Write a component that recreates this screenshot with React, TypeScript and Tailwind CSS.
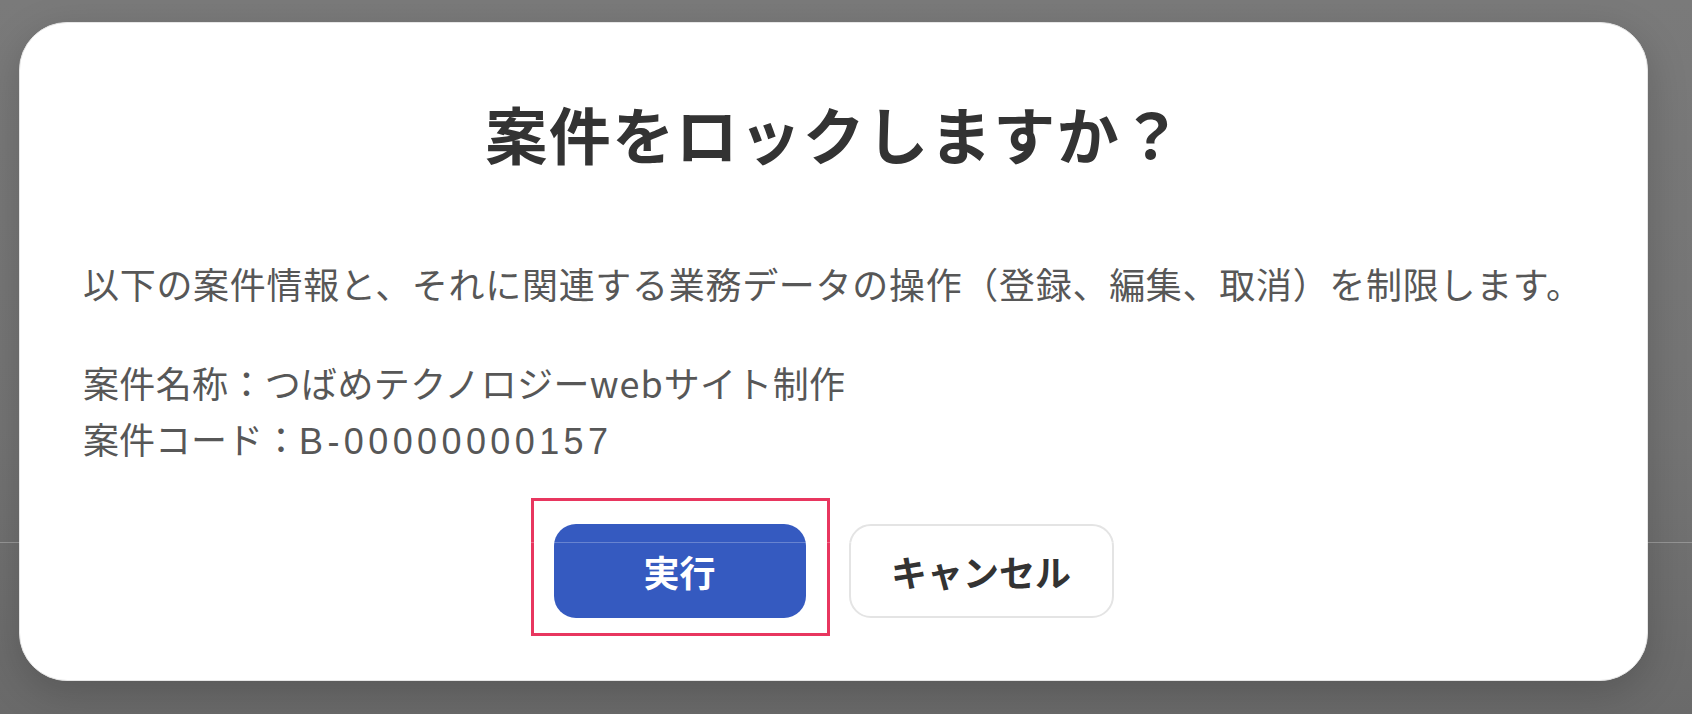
import React from "react";

export default function App() {
  return (
    <div className="relative w-[1692px] h-[714px] overflow-hidden bg-[linear-gradient(180deg,#7a7a7a_0%,#747474_60%,#6a6a6a_100%)] pt-[22px] pl-[19px] font-['Noto_Sans_CJK_JP','Noto_Sans',sans-serif]">
      <div className="w-[1629px] h-[659px] bg-white rounded-[48px] border border-[#e6e6e6] shadow-[0_12px_40px_rgba(0,0,0,0.18)] flex flex-col">
        <h1 className="pt-[79px] pl-[2px] text-center text-[62px] leading-[62px] font-bold tracking-[1.5px] text-[#333333]">
          案件をロックしますか？
        </h1>
        <div className="pl-[63px] text-[36px] leading-[56px] text-[#575757]">
          <p className="mt-[91px] tracking-[0.7px]">
            以下の案件情報と、それに関連する業務データの操作（登録、編集、取消）を制限します。
          </p>
          <p className="mt-[43px] tracking-[0.35px]">
            案件名称：つばめテクノロジー<span className="tracking-[1px]">web</span>サイト制作
          </p>
          <p>
            案件コード：<span className="font-['Liberation_Sans',sans-serif] tracking-[4.4px]">B-00000000157</span>
          </p>
        </div>
        <div className="mt-[54px] flex justify-center gap-[43px]">
          <div className="relative">
            <button className="w-[252px] h-[94px] rounded-[22px] bg-[#355ac0] text-white text-[36px] font-bold">
              実行
            </button>
            <div className="pointer-events-none absolute left-[-23px] top-[-26px] w-[299px] h-[138px] border-[3px] border-[#e8365f]" />
          </div>
          <button className="w-[265px] h-[94px] rounded-[22px] border-2 border-[#e4e4e4] bg-white text-[#333333] text-[36px] font-bold">
            キャンセル
          </button>
        </div>
      </div>
      <div className="pointer-events-none absolute left-0 top-[542px] w-full h-px bg-white/25" />
    </div>
  );
}
